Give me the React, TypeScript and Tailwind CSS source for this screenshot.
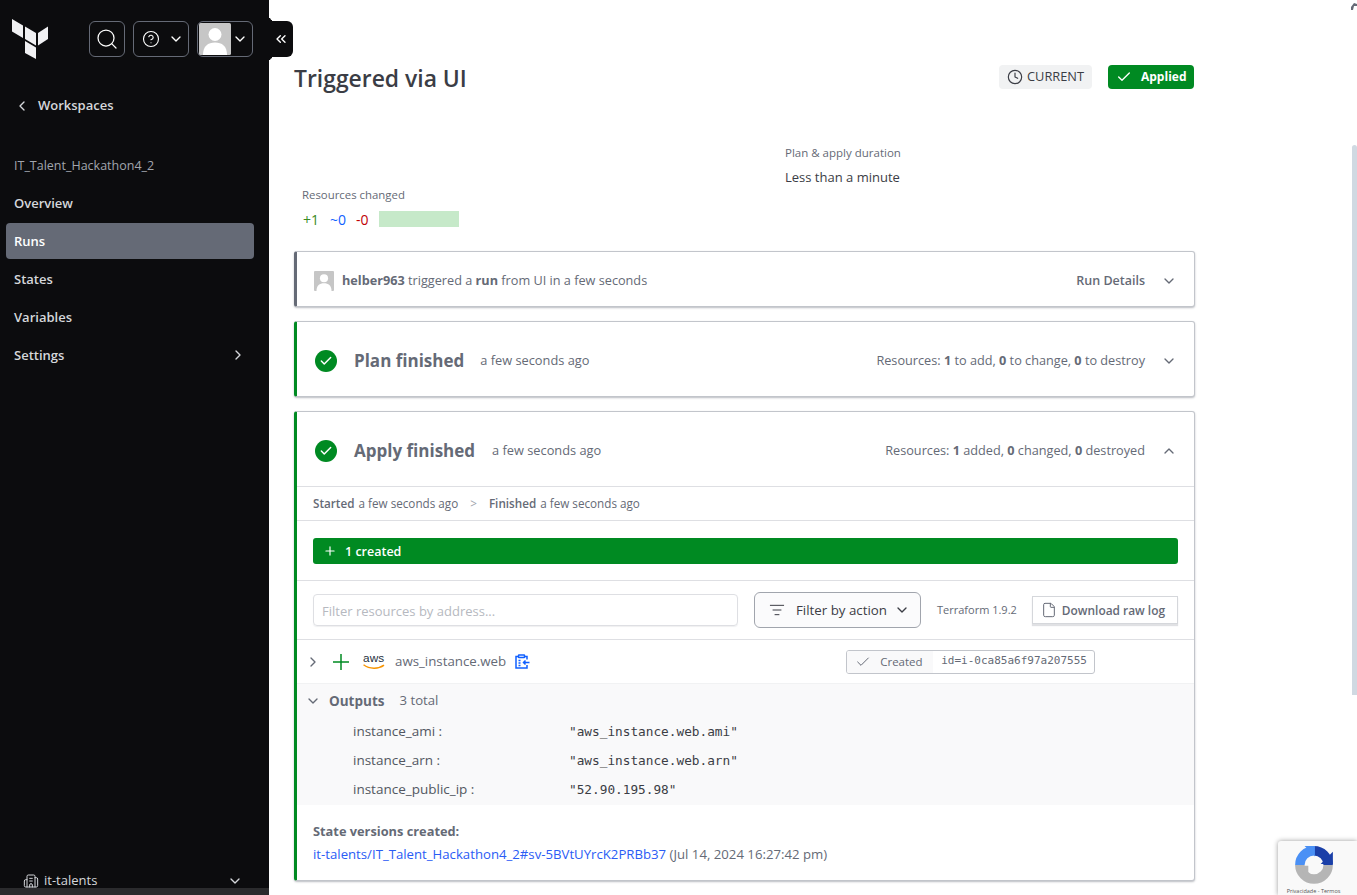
import { Check, ChevronDown, ChevronLeft, ChevronRight, ChevronUp, ChevronsLeft, CircleHelp, Clock, File, ListFilter, Plus, Search, Building2 } from "lucide-react";
import type { ReactNode } from "react";

const FONT = "font-['Open_Sans','Noto_Sans',sans-serif]";

function TerraformLogo() {
  return (
    <svg viewBox="0 0 36 40" className="-mt-[2px] h-10 w-9" fill="#f1f1f3">
      <path d="M0 0 L11 6.5 V19 L0 12.5Z" />
      <path d="M13 7.5 L24 14 V26.5 L13 20Z" />
      <path d="M36 7.5 L26 14 V26.5 L36 20Z" />
      <path d="M13 22 L24 28.5 V40 L13 34Z" />
    </svg>
  );
}

function UserGlyph({ className }: { className: string }) {
  return (
    <svg viewBox="0 0 32 32" className={className}>
      <rect width="32" height="32" rx="1.5" fill="#c6c6c6" />
      <circle cx="16" cy="11.5" r="6.5" fill="#fff" />
      <path d="M4 32 C4 23 9 19.5 16 19.5 C23 19.5 28 23 28 32Z" fill="#fff" />
    </svg>
  );
}

function CheckCircle() {
  return (
    <div className="flex h-[22px] w-[22px] items-center justify-center rounded-full bg-[#008a22]">
      <Check className="h-3.5 w-3.5 text-white" strokeWidth={2.5} />
    </div>
  );
}

function NavItem({ label, active, chevron }: { label: string; active?: boolean; chevron?: boolean }) {
  return (
    <div className={`ml-1.5 mr-[15px] flex h-9 items-center justify-between rounded pl-2 pr-2 text-[13px] font-semibold ${active ? "bg-[#656a76] text-white" : "text-[#d5d7db]"}`}>
      {label}
      {chevron ? <ChevronRight className="h-4 w-4 text-[#d5d7db]" /> : null}
    </div>
  );
}

function Sidebar() {
  return (
    <aside className="flex h-[895px] w-[269px] shrink-0 flex-col bg-[#0c0c0e]">
      <div className="flex items-start pl-3 pt-[21px]">
        <TerraformLogo />
        <div className="ml-[41px] flex h-9 w-9 items-center justify-center rounded-md border border-[#656a76]">
          <Search className="h-6 w-6 text-white" strokeWidth={1.25} />
        </div>
        <div className="ml-2 flex h-9 w-14 items-center justify-between rounded-md border border-[#656a76] pl-2 pr-1">
          <CircleHelp className="h-[18px] w-[18px] text-white" strokeWidth={1.5} />
          <ChevronDown className="h-4 w-4 text-white" />
        </div>
        <div className="ml-2 flex h-9 w-14 items-center justify-between rounded-md border border-[#656a76] pl-px pr-1">
          <UserGlyph className="h-8 w-8" />
          <ChevronDown className="h-4 w-4 text-white" />
        </div>
      </div>
      <div className="mt-[37px] flex items-center pl-[14px] text-[13px] font-semibold text-[#d5d7db]">
        <ChevronLeft className="h-4 w-4" />
        <span className="ml-2">Workspaces</span>
      </div>
      <div className="mt-[41px] pl-3.5 text-[12.5px] text-[#a1a5ad]">IT_Talent_Hackathon4_2</div>
      <div className="mt-[10px] flex flex-col gap-0.5">
        <NavItem label="Overview" />
        <NavItem label="Runs" active />
        <NavItem label="States" />
        <NavItem label="Variables" />
        <NavItem label="Settings" chevron />
      </div>
      <div className="mt-auto flex h-[14px] items-center justify-between pl-[23px] pr-[26px] text-[13px] text-[#d5d7db]">
        <div className="flex items-center gap-[5px]">
          <Building2 className="h-4 w-4" strokeWidth={1.5} />
          it-talents
        </div>
        <ChevronDown className="h-4 w-4" />
      </div>
      <div className="h-[7px] bg-[#2b2b2d]" />
    </aside>
  );
}

function Card({ accent, children }: { accent: string; children: ReactNode }) {
  return (
    <section className={`rounded-[3px] border border-l-[3px] border-[#c2c5cb] bg-white shadow-[0_1px_2px_rgba(101,106,118,0.45)] ${accent}`}>
      {children}
    </section>
  );
}

function Sep() {
  return <div className="border-t border-[#dedfe3]" />;
}

function OutputRow({ name, value }: { name: string; value: string }) {
  return (
    <div className="flex h-[29px] items-center pl-[56px] text-[13.5px]">
      <span className="w-[216px] text-[#525761]">{name}</span>
      <span className="font-['DejaVu_Sans_Mono',monospace] text-[12.75px] font-medium text-[#3b3d45]">{value}</span>
    </div>
  );
}

function AwsLogo() {
  return (
    <svg viewBox="0 0 24 22" className="h-[20px] w-6">
      <text x="0" y="10.5" fontFamily="'Liberation Sans',sans-serif" fontSize="13" fill="#252f3e">aws</text>
      <path d="M0.5 14 C7 19 17 19 23 14.5" fill="none" stroke="#f79400" strokeWidth="1.6" />
    </svg>
  );
}

function PlanDocIcon() {
  return (
    <svg viewBox="0 0 16 16" className="h-4 w-4" fill="none" stroke="#1060ff" strokeWidth="1.5">
      <path d="M11 2.5h2v3M13 11v3h-11V2.500h2" />
      <rect x="4.500" y="1" width="6" height="2.500" rx="0.500" />
      <path d="M4.500 6.500h2M4.500 9h2M4.500 11.500h2M15.500 8.500H9.500M11.500 6.500l-2 2 2 2" />
    </svg>
  );
}

function Recaptcha() {
  return (
    <div className="absolute bottom-0 right-0 flex h-[54px] w-[79px] flex-col items-center rounded-tl-[3px] bg-[#f9f9f9] pr-2 shadow-[0_0_5px_rgba(0,0,0,0.4)]">
      <svg viewBox="0 0 40 40" className="mt-[5px] h-[38px] w-[38px]" fill="none" strokeWidth="10">
        <path d="M5 20 A15 15 0 0 1 20 5" stroke="#4a90f5" />
        <path d="M20 5 A15 15 0 0 1 35 20" stroke="#1a3fa8" />
        <path d="M35 20 A15 15 0 0 1 5 20" stroke="#b5b5b5" />
        <path d="M10 0 L21 0 L21 11Z" fill="#4a90f5" stroke="none" />
        <path d="M40 6 L40 19 L27 19Z" fill="#1a3fa8" stroke="none" />
        <path d="M0 21 L14 21 L14 33Z" fill="#b5b5b5" stroke="none" />
      </svg>
      <span className="mt-[3px] whitespace-nowrap text-[5.5px] text-[#555]">Privacidade - Termos</span>
    </div>
  );
}

export default function App() {
  return (
    <div className={`relative flex h-[895px] w-[1357px] overflow-hidden bg-white ${FONT}`}>
      <Sidebar />
      <div className="absolute left-[269px] top-[15px] h-1.5 w-1.5 overflow-hidden">
        <div className="h-1.5 w-1.5 rounded-bl-[6px] shadow-[-3px_3px_0_0_#0c0c0e]" />
      </div>
      <div className="absolute left-[269px] top-[57px] h-1.5 w-1.5 overflow-hidden">
        <div className="h-1.5 w-1.5 rounded-tl-[6px] shadow-[-3px_-3px_0_0_#0c0c0e]" />
      </div>
      <div className="absolute left-[269px] top-[21px] flex h-9 w-6 items-center justify-center rounded-r-md bg-[#0c0c0e] text-white">
        <ChevronsLeft className="h-4 w-4" />
      </div>
      <main className="w-[926px] shrink-0 pl-[25px] text-[#656a76]">
        <div className="flex h-[95px] items-end justify-between pr-px">
          <h1 className="mb-px text-[22.9px] font-semibold leading-[30px] text-[#3b3d45]">Triggered via UI</h1>
          <div className="mb-[6px] flex items-center gap-4">
            <span className="flex h-6 w-[93px] items-center gap-1 rounded bg-[#f1f2f3] pl-2 text-[12.8px] text-[#3b3d45]">
              <Clock className="h-4 w-4" strokeWidth={1.75} />
              CURRENT
            </span>
            <span className="flex h-6 w-[86px] items-center gap-[9px] rounded-sm bg-[#008a22] pl-2 text-[12px] font-bold text-white">
              <Check className="h-4 w-4" strokeWidth={2} />
              Applied
            </span>
          </div>
        </div>
        <div className="flex h-[156px] items-start">
          <div className="ml-[8px] mt-[92px] w-[483px]">
            <div className="text-[11.4px] leading-4">Resources changed</div>
            <div className="mt-2 flex h-4 items-center pl-px text-[14px]">
              <span className="text-[#3a8a22]">+1</span>
              <span className="ml-[11px] text-[#1060ff]">~0</span>
              <span className="ml-[10px] text-[#c00005]">-0</span>
              <span className="ml-[10px] h-4 w-20 bg-[#c6e9c9]" />
            </div>
          </div>
          <div className="mt-[50px]">
            <div className="text-[11.5px] leading-4">Plan &amp; apply duration</div>
            <div className="mt-2 text-[13px] leading-4 text-[#3b3d45]">Less than a minute</div>
          </div>
        </div>
        <div className="flex w-[901px] flex-col gap-[14px]">
          <Card accent="border-l-[#656a76]">
            <div className="flex h-[54px] items-center pl-[17px] pr-[17px] pt-1 text-[12.7px]">
              <UserGlyph className="h-5 w-5" />
              <span className="ml-2">
                <b className="font-bold">helber963</b> triggered a <b className="font-bold">run</b> from UI in a few seconds
              </span>
              <span className="ml-auto text-[12.5px] font-semibold">Run Details</span>
              <ChevronDown className="ml-4 h-4 w-4" />
            </div>
          </Card>
          <Card accent="border-l-[#008a22]">
            <div className="flex h-[74px] items-center pl-[18px] pr-[17px] pt-[3px]">
              <CheckCircle />
              <span className="ml-[17px] text-[17px] font-bold">Plan finished</span>
              <span className="ml-4 text-[12.8px] font-medium">a few seconds ago</span>
              <span className="ml-auto text-[12.7px]">
                Resources: <b className="font-bold">1</b> to add, <b className="font-bold">0</b> to change, <b className="font-bold">0</b> to destroy
              </span>
              <ChevronDown className="ml-4 h-4 w-4" />
            </div>
          </Card>
          <Card accent="border-l-[#008a22]">
            <div className="flex h-[74px] items-center pl-[18px] pr-[17px] pt-[3px]">
              <CheckCircle />
              <span className="ml-[17px] text-[17px] font-bold">Apply finished</span>
              <span className="ml-[17px] text-[12.8px] font-medium">a few seconds ago</span>
              <span className="ml-auto text-[12.7px]">
                Resources: <b className="font-bold">1</b> added, <b className="font-bold">0</b> changed, <b className="font-bold">0</b> destroyed
              </span>
              <ChevronUp className="ml-4 h-4 w-4" />
            </div>
            <Sep />
            <div className="flex h-[33px] items-center pl-4 text-[11.7px]">
              <b className="font-semibold">Started</b>
              <span className="ml-1">a few seconds ago</span>
              <span className="mx-3 text-[#a1a5ad]">&gt;</span>
              <b className="font-semibold">Finished</b>
              <span className="ml-1">a few seconds ago</span>
            </div>
            <Sep />
            <div className="flex h-[60px] items-center border-b border-[#dedfe3] px-4">
              <div className="flex h-[26px] w-full items-center gap-2 rounded-[3px] bg-[#008a22] pl-2.5 pt-[3px] text-[12.5px] font-semibold text-white">
                <Plus className="-mt-[3px] h-3.5 w-3.5" strokeWidth={2} />
                1 created
              </div>
            </div>
            <div className="flex h-[58px] items-center pl-4">
              <div className="flex h-8 w-[425px] items-center rounded-sm border border-[#dedfe3] pl-2 pt-[3px] text-[13px] text-[#b6b9c0] shadow-[0_1px_1px_rgba(101,106,118,0.1)]">
                Filter resources by address...
              </div>
              <div className="ml-4 flex h-9 w-[167px] items-center rounded-md border border-[#a1a5ad] bg-[#fbfbfc] pl-[14px] text-[13.3px] text-[#3b3d45]">
                <ListFilter className="h-4 w-4" strokeWidth={1.5} />
                <span className="ml-[11px] pt-px">Filter by action</span>
                <ChevronDown className="ml-[7px] h-4 w-4" />
              </div>
              <span className="ml-4 text-[11px]">Terraform 1.9.2</span>
              <div className="ml-[15px] flex h-7 w-[146px] items-center gap-[5px] border border-[#d5d7db] pl-2 text-[11.9px] font-semibold shadow-[0_2px_1px_rgba(101,106,118,0.2)]">
                <File className="h-4 w-4" strokeWidth={1.5} />
                <span className="pt-px">Download raw log</span>
              </div>
            </div>
            <Sep />
            <div className="flex h-[43px] items-center pl-2 text-[13.3px]">
              <ChevronRight className="h-4 w-4" />
              <svg viewBox="0 0 16 16" className="ml-[12px] h-4 w-4" fill="none" stroke="#008a22" strokeWidth="1.5">
                <path d="M8 0v16M0 8h16" />
              </svg>
              <span className="ml-[13px]">
                <AwsLogo />
              </span>
              <span className="ml-[9px] font-medium">aws_instance.web</span>
              <span className="ml-2">
                <PlanDocIcon />
              </span>
              <div className="ml-[316px] flex h-6 w-[249px] items-center overflow-hidden rounded-[3px] border border-[#c2c5cb] text-[11.5px]">
                <span className="flex h-full w-[86px] items-center gap-[9px] bg-[#f9f9fa] pl-2">
                  <Check className="h-4 w-4" strokeWidth={1.5} />
                  Created
                </span>
                <span className="flex h-full flex-1 items-center pl-2 font-['DejaVu_Sans_Mono',monospace] text-[11px]">
                  id=i-0ca85a6f97a207555
                </span>
              </div>
            </div>
            <div className="h-[122px] border-t border-[#f1f2f3] bg-[#f9f9fa]">
              <div className="flex h-[33px] items-center pl-2 pt-px text-[13.5px]">
                <ChevronDown className="h-4 w-4" />
                <b className="ml-2 font-bold">Outputs</b>
                <span className="ml-[15px] text-[13.2px]">3 total</span>
              </div>
              <OutputRow name="instance_ami :" value={'"aws_instance.web.ami"'} />
              <OutputRow name="instance_arn :" value={'"aws_instance.web.arn"'} />
              <OutputRow name="instance_public_ip :" value={'"52.90.195.98"'} />
            </div>
            <div className="flex h-[75px] flex-col justify-center gap-1 pl-4 pt-px text-[13.2px]">
              <b className="text-[12.8px] font-bold">State versions created:</b>
              <div>
                <span className="text-[#2a5cf5]">it-talents/IT_Talent_Hackathon4_2#sv-5BVtUYrcK2PRBb37</span> (Jul 14, 2024 16:27:42 pm)
              </div>
            </div>
          </Card>
        </div>
      </main>
      <svg viewBox="0 0 6 7" className="absolute right-0 top-[3px] h-[7px] w-[6px]" fill="#656a76">
        <path d="M0 7 L0 4 L3 0 L6 1 L6 3 L3 3 L2 7Z" />
      </svg>
      <div className="absolute right-0 top-[145px] h-[550px] w-[5px] rounded-t-sm bg-[#d0d9e2]" />
      <Recaptcha />
    </div>
  );
}
